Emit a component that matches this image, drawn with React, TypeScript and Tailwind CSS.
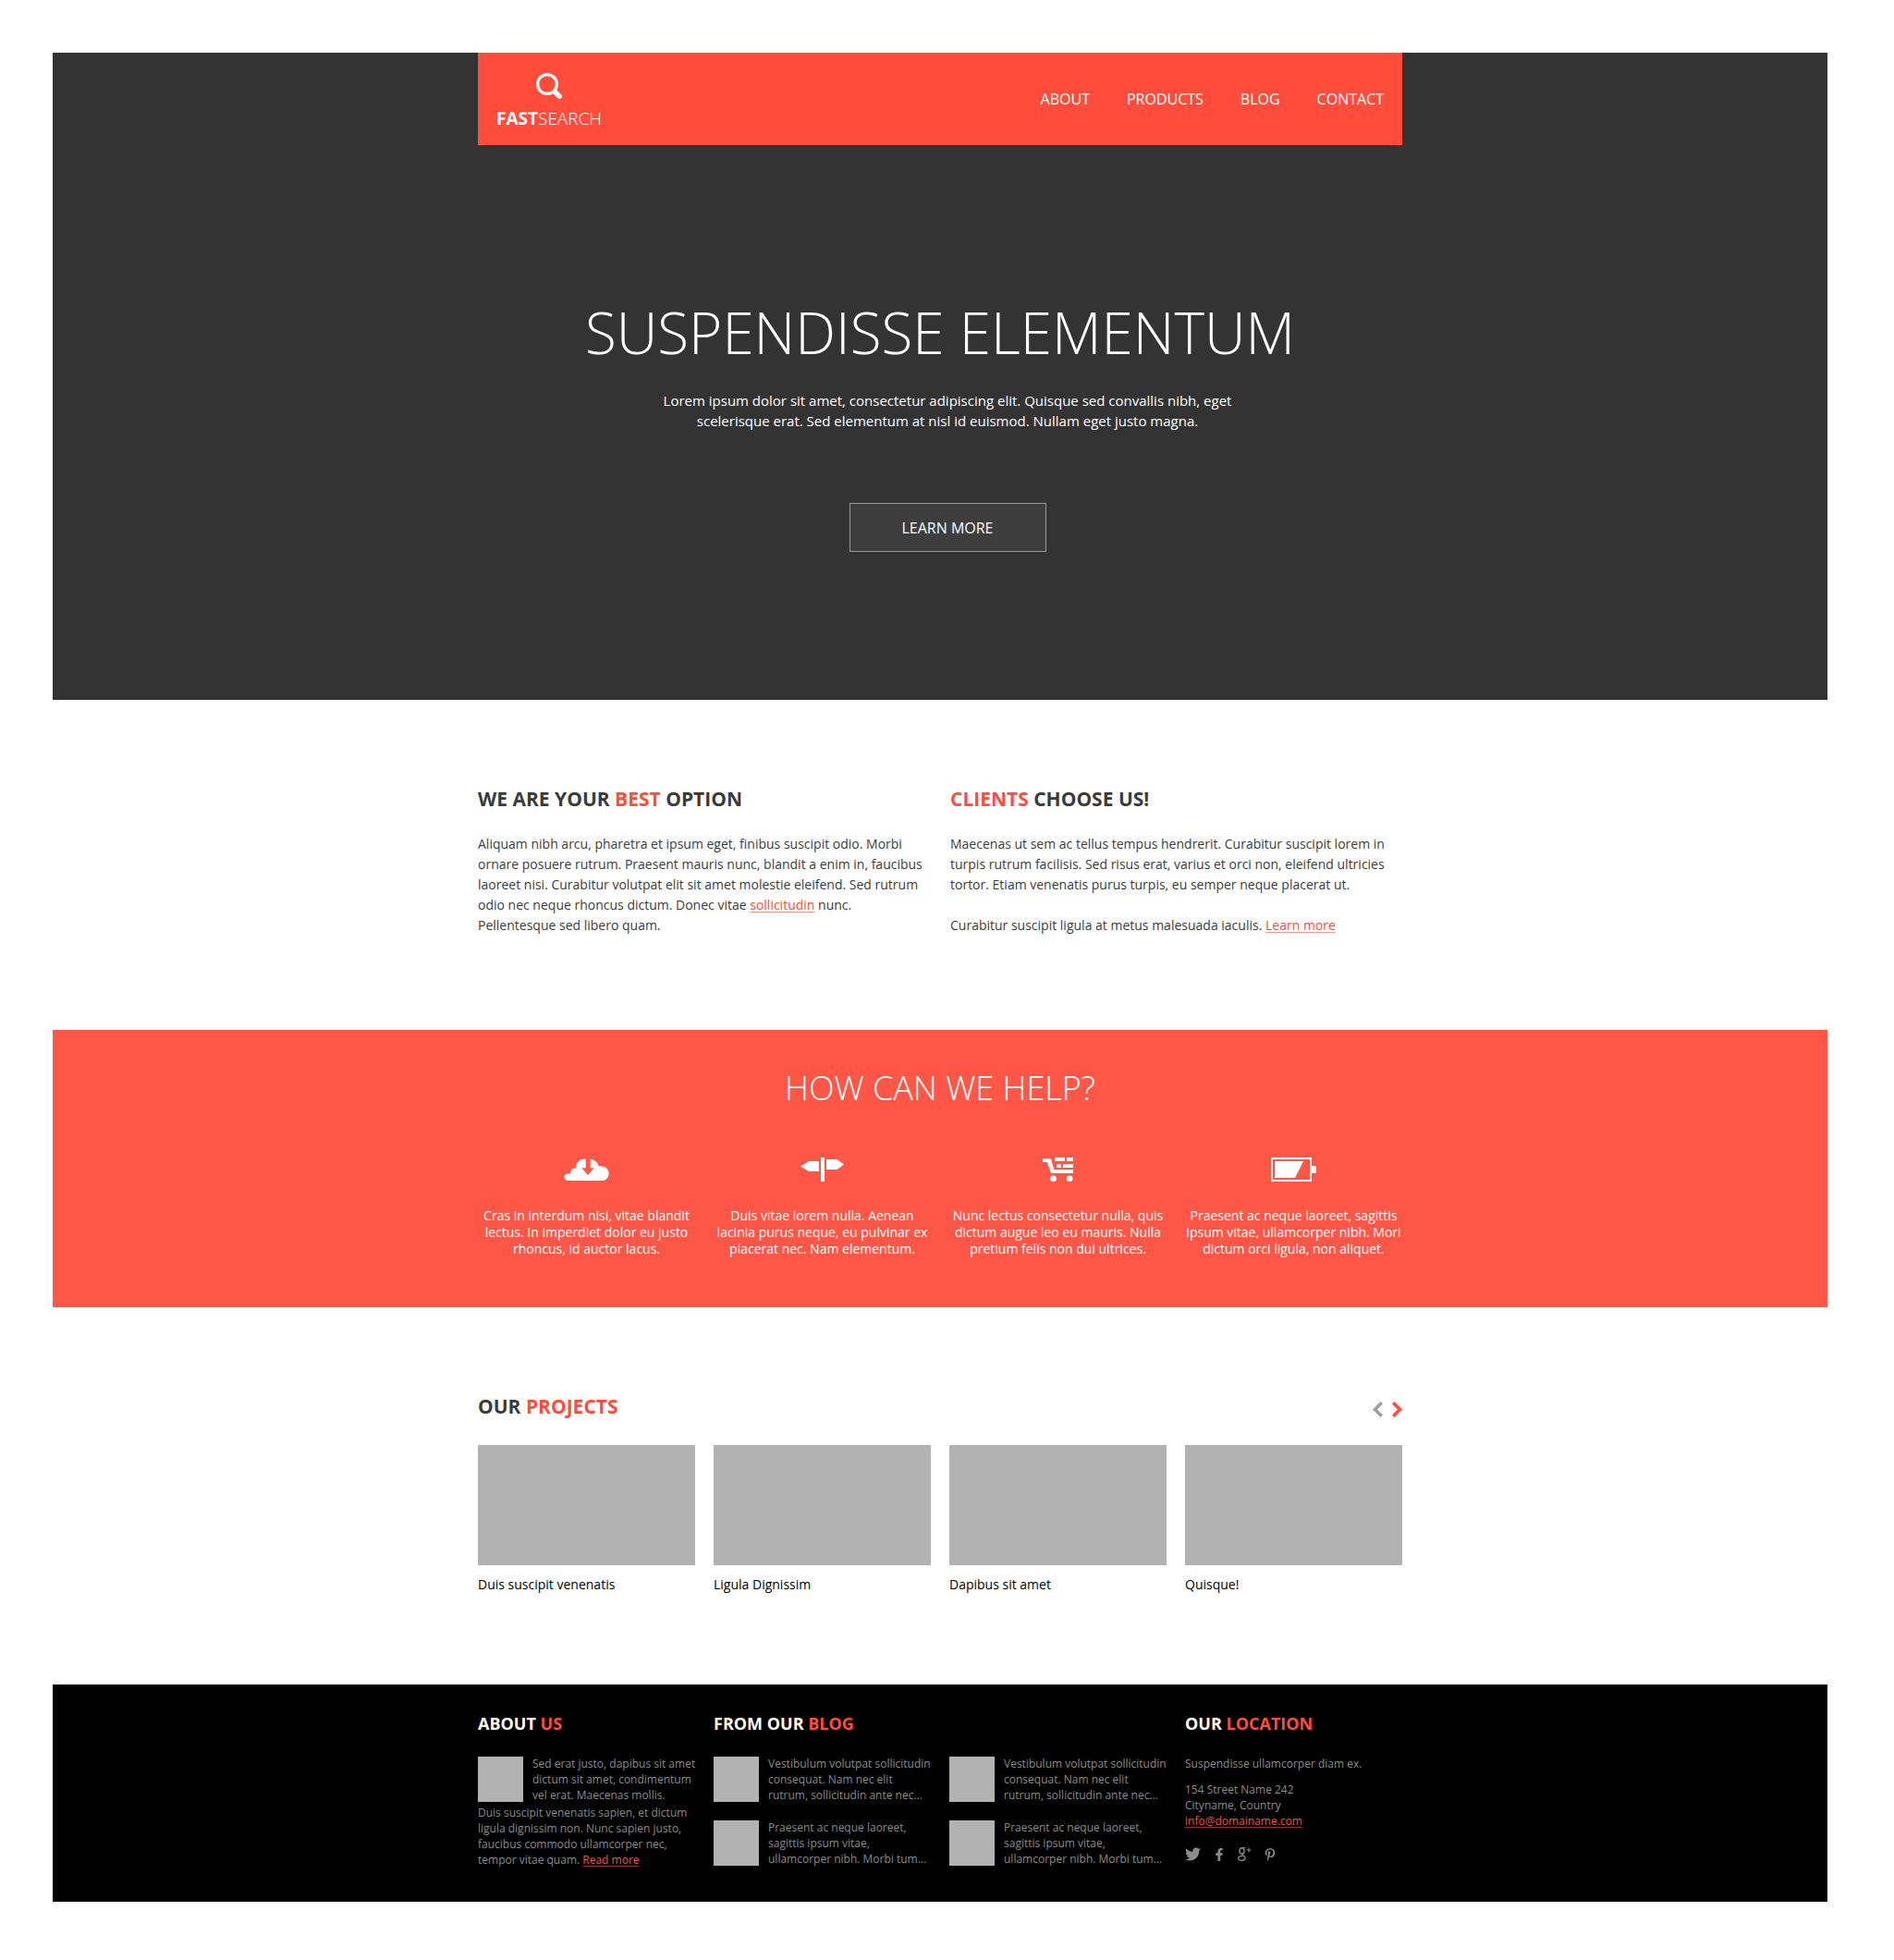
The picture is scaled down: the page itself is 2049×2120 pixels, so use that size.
import React from "react";
import { FaFacebookF, FaPinterestP, FaTwitter } from "react-icons/fa";

const navItems = ["About", "Products", "Blog", "Contact"];

function SearchLogo() {
  return (
    <svg width="28" height="28" viewBox="0 0 28 28" fill="none" stroke="currentColor" aria-hidden="true">
      <circle cx="12" cy="12" r="10.4" strokeWidth="3.2" />
      <path d="M20.500 20.500 25.200 25.200" strokeWidth="5.400" strokeLinecap="round" />
    </svg>
  );
}

function CloudIcon() {
  return (
    <svg width="49" height="26" viewBox="0 0 49 26" fill="currentColor" aria-hidden="true">
      <path d="M4.5 25A4 4 0 0 1 .5 21.2C.5 18.800 2.500 17.300 4.500 17.300H7.200V16A5 5 0 0 1 12 11.400H13.300V9.500C13.300 5 18 1.500 23.700 1.500V11.300H19.300L26 19 32.600 11.300H28.700V1.800C33.400 2.500 37 5.600 37.600 9.500 44 8.600 48.600 12.200 48.600 17.200 48.600 21.500 45.500 25 42 25Z" />
    </svg>
  );
}

function SignpostIcon() {
  return (
    <svg width="47" height="26" viewBox="0 0 47 26" fill="currentColor" aria-hidden="true">
      <path d="M22 0H26V26H22ZM20 4V15H9L0 9.500 9 4ZM28 2H39.500L47 7.500 39.500 13H28Z" />
    </svg>
  );
}

function CartIcon() {
  return (
    <svg width="33" height="26" viewBox="0 0 33 26" fill="currentColor" aria-hidden="true">
      <path d="M0 1H7.500C8.500 1 9 1.500 9.300 2.500L12.300 13H33V17H9L5 5H0Z" />
      <path d="M13 0H24V4H13ZM26 0H33V4H26ZM15 7H20V11H15ZM22 7H33V11H22Z" />
      <circle cx="11.500" cy="22.800" r="3.400" />
      <circle cx="29.200" cy="22.800" r="3.400" />
    </svg>
  );
}

function BatteryIcon() {
  return (
    <svg width="49" height="26" viewBox="0 0 49 26" fill="currentColor" aria-hidden="true">
      <path fillRule="evenodd" d="M0 0H44V9H49V17H44V26H0ZM2 2V24H42V2Z" />
      <path d="M4 4H35L26 22H4Z" />
    </svg>
  );
}

function GooglePlusIcon() {
  return (
    <svg width="15" height="15" viewBox="0 0 15 15" fill="none" stroke="currentColor" aria-hidden="true">
      <ellipse cx="4.500" cy="4" rx="2.500" ry="3.200" strokeWidth="1.400" />
      <path d="M4.600.7H8.600" strokeWidth="1" />
      <path d="M6.300 6.300C5 7.300 4.600 8 5.800 8.900 7.600 10 8.300 10.800 8.100 12 7.800 13.500 6.300 14.300 4.300 14.300 2.200 14.300.7 13.400.7 11.900.7 10.200 2.600 9.300 5.500 9.300" strokeWidth="1.300" />
      <path d="M12 .5V5.500M9.500 3H14.500" strokeWidth="1" />
    </svg>
  );
}

function Chevron({ flip }: { flip?: boolean }) {
  return (
    <svg width="11" height="17" viewBox="0 0 11 17" fill="currentColor" aria-hidden="true">
      <path d={flip ? "M2.500 0 11 8.500 2.500 17 0 14.500 6 8.500 0 2.500Z" : "M8.500 0 0 8.500 8.500 17 11 14.500 5 8.500 11 2.500Z"} />
    </svg>
  );
}

const helpItems = [
  { icon: <CloudIcon />, lines: ["Cras in interdum nisi, vitae blandit", "lectus. In imperdiet dolor eu justo", "rhoncus, id auctor lacus."] },
  { icon: <SignpostIcon />, lines: ["Duis vitae lorem nulla. Aenean", "lacinia purus neque, eu pulvinar ex", "placerat nec. Nam elementum."] },
  { icon: <CartIcon />, lines: ["Nunc lectus consectetur nulla, quis", "dictum augue leo eu mauris. Nulla", "pretium felis non dui ultrices."] },
  { icon: <BatteryIcon />, lines: ["Praesent ac neque laoreet, sagittis", "ipsum vitae, ullamcorper nibh. Mori", "dictum orci ligula, non aliquet."] },
];

const projects = ["Duis suscipit venenatis", "Ligula Dignissim", "Dapibus sit amet", "Quisque!"];

const posts = [
  ["Vestibulum volutpat sollicitudin", "consequat. Nam nec elit", "rutrum, sollicitudin ante nec..."],
  ["Vestibulum volutpat sollicitudin", "consequat. Nam nec elit", "rutrum, sollicitudin ante nec..."],
  ["Praesent ac neque laoreet,", "sagittis ipsum vitae,", "ullamcorper nibh. Morbi tum..."],
  ["Praesent ac neque laoreet,", "sagittis ipsum vitae,", "ullamcorper nibh. Morbi tum..."],
];

const socials = [
  { label: "Twitter", icon: <FaTwitter size={17} /> },
  { label: "Facebook", icon: <FaFacebookF size={14} /> },
  { label: "Google Plus", icon: <GooglePlusIcon /> },
  { label: "Pinterest", icon: <FaPinterestP size={14} /> },
];

function Lines({ lines }: { lines: string[] }) {
  return (
    <>
      {lines.map((line) => (
        <span key={line} className="block whitespace-nowrap">
          {line}
        </span>
      ))}
    </>
  );
}

function Media({ lines }: { lines: string[] }) {
  return (
    <div className="flex items-center gap-[10px]">
      <div className="size-[49px] shrink-0 bg-[#b2b2b2]" />
      <p>
        <Lines lines={lines} />
      </p>
    </div>
  );
}

const container = "mx-auto w-full max-w-[1000px]";
const sectionHeading = "text-[21px] leading-7 font-bold text-[#3a3a3a]";
const footerHeading = "text-[18px] leading-6 font-bold text-white";
const textLink =
  "text-[#ff4c3b] underline decoration-[#ff4c3b]/60 decoration-1 underline-offset-2 [text-decoration-skip-ink:none]";

export default function App() {
  return (
    <div className="bg-white pt-[57px] pr-[72px] pb-[63px] pl-[57px] font-['Open_Sans',sans-serif] text-[14px] leading-[22px] text-[#3c3c3c]">
      <div className="bg-[#333333] pb-[160px] text-white">
        <header className={`${container} flex h-[100px] items-center justify-between bg-[#ff4c3b] px-5`}>
          <a href="#home" className="flex flex-col items-center gap-[7px] pt-[6px]">
            <SearchLogo />
            <span className="text-[19px] leading-7 font-light">
              <b className="font-bold">FAST</b>SEARCH
            </span>
          </a>
          <nav className="flex gap-10 text-[16px] leading-6 uppercase">
            {navItems.map((item) => (
              <a key={item} href={`#${item.toLowerCase()}`}>
                {item}
              </a>
            ))}
          </nav>
        </header>
        <section className={`${container} pt-[162px] text-center`}>
          <h1 className="text-[62px] leading-[80px] font-light whitespace-nowrap">SUSPENDISSE ELEMENTUM</h1>
          <div className="pt-[23px] pl-4">
            <p className="text-[15px]">
              <Lines
                lines={[
                  "Lorem ipsum dolor sit amet, consectetur adipiscing elit. Quisque sed convallis nibh, eget",
                  "scelerisque erat. Sed elementum at nisl id euismod. Nullam eget justo magna.",
                ]}
              />
            </p>
            <button type="button" className="mt-[78px] h-[53px] w-[213px] border border-[#989898] bg-[#3d3d3d] text-[16px]">
              LEARN MORE
            </button>
          </div>
        </section>
      </div>

      <section className={`${container} grid grid-cols-2 gap-x-[22px] pt-[93px] pb-[102px]`}>
        <article>
          <h2 className={sectionHeading}>
            WE ARE YOUR <span className="text-[#ff4c3b]">BEST</span> OPTION
          </h2>
          <p className="mt-6">
            Aliquam nibh arcu, pharetra et ipsum eget, finibus suscipit odio. Morbi ornare posuere rutrum. Praesent
            mauris nunc, blandit a enim in, faucibus laoreet nisi. Curabitur volutpat elit sit amet molestie eleifend.
            Sed rutrum odio nec neque rhoncus dictum. Donec vitae{" "}
            <a href="#sollicitudin" className={textLink}>
              sollicitudin
            </a>{" "}
            nunc. Pellentesque sed libero quam.
          </p>
        </article>
        <article>
          <h2 className={sectionHeading}>
            <span className="text-[#ff4c3b]">CLIENTS</span> CHOOSE US!
          </h2>
          <p className="mt-6">
            Maecenas ut sem ac tellus tempus hendrerit. Curabitur suscipit lorem in turpis rutrum facilisis. Sed risus
            erat, varius et orci non, eleifend ultricies tortor. Etiam venenatis purus turpis, eu semper neque placerat
            ut.
          </p>
          <p className="mt-[22px]">
            Curabitur suscipit ligula at metus malesuada iaculis.{" "}
            <a href="#learn-more" className={textLink}>
              Learn more
            </a>
          </p>
        </article>
      </section>

      <section className="bg-[#fe5748] pt-[39px] pb-[54px] text-center text-white">
        <h2 className="text-[36px] leading-[48px] font-light">HOW CAN WE HELP?</h2>
        <div className={`${container} mt-[51px] grid grid-cols-4 gap-5`}>
          {helpItems.map((item) => (
            <div key={item.lines[0]} className="flex flex-col items-center gap-7">
              {item.icon}
              <p className="leading-[18px]">
                <Lines lines={item.lines} />
              </p>
            </div>
          ))}
        </div>
      </section>

      <section className={`${container} pt-[93px] pb-[97px]`}>
        <div className="flex items-start justify-between">
          <h2 className={sectionHeading}>
            OUR <span className="text-[#ff4c3b]">PROJECTS</span>
          </h2>
          <div className="flex gap-[10px] pt-[9px]">
            <button type="button" aria-label="Previous projects" className="text-[#9f9f9f]">
              <Chevron />
            </button>
            <button type="button" aria-label="Next projects" className="text-[#ff4c3b]">
              <Chevron flip />
            </button>
          </div>
        </div>
        <div className="mt-7 grid grid-cols-4 gap-5">
          {projects.map((name) => (
            <figure key={name}>
              <div className="h-[130px] bg-[#b2b2b2]" />
              <figcaption className="mt-[10px] text-black">{name}</figcaption>
            </figure>
          ))}
        </div>
      </section>

      <footer className="bg-black pt-[30px] pb-[37px] text-[12px] leading-[17px] text-[#8a8a8a]">
        <div className={`${container} grid grid-cols-4 gap-5`}>
          <section>
            <h3 className={footerHeading}>
              ABOUT <span className="text-[#ff4c3b]">US</span>
            </h3>
            <div className="mt-[23px]">
              <Media lines={["Sed erat justo, dapibus sit amet", "dictum sit amet, condimentum", "vel erat. Maecenas mollis."]} />
              <p className="mt-[2px]">
                <Lines
                  lines={[
                    "Duis suscipit venenatis sapien, et dictum",
                    "ligula dignissim non. Nunc sapien justo,",
                    "faucibus commodo ullamcorper nec,",
                  ]}
                />
                tempor vitae quam.{" "}
                <a href="#read-more" className={textLink}>
                  Read more
                </a>
              </p>
            </div>
          </section>
          <section className="col-span-2">
            <h3 className={footerHeading}>
              FROM OUR <span className="text-[#ff4c3b]">BLOG</span>
            </h3>
            <div className="mt-[23px] grid grid-cols-2 gap-x-5 gap-y-[18px]">
              {posts.map((lines, i) => (
                <Media key={i} lines={lines} />
              ))}
            </div>
          </section>
          <section>
            <h3 className={footerHeading}>
              OUR <span className="text-[#ff4c3b]">LOCATION</span>
            </h3>
            <p className="mt-[23px]">Suspendisse ullamcorper diam ex.</p>
            <address className="mt-[11px] not-italic">
              154 Street Name 242
              <br />
              Cityname, Country
              <br />
              <a href="mailto:info@domainame.com" className={textLink}>
                info@domainame.com
              </a>
            </address>
            <div className="mt-5 flex h-[15px] items-center gap-[13px]">
              {socials.map((s) => (
                <a key={s.label} href={`#${s.label.toLowerCase().replace(" ", "-")}`} aria-label={s.label}>
                  {s.icon}
                </a>
              ))}
            </div>
          </section>
        </div>
      </footer>
    </div>
  );
}
